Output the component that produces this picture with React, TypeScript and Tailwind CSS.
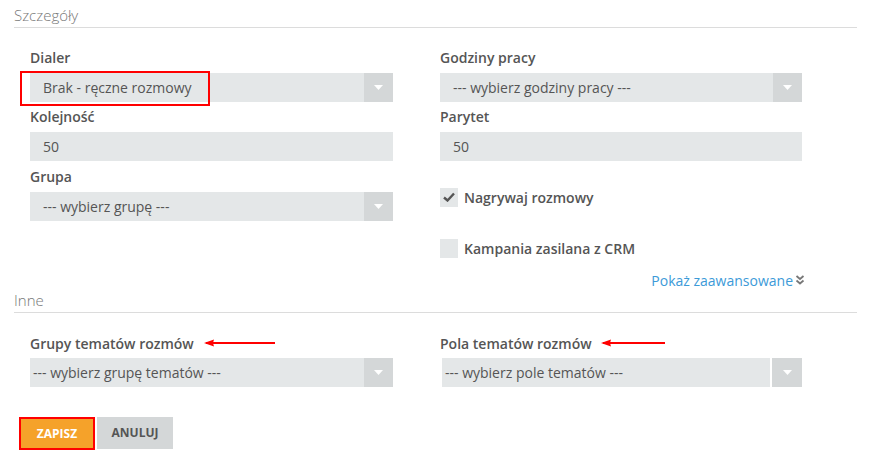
import React from 'react';

const font = { fontFamily: '"Open Sans", "Liberation Sans", sans-serif' };

function Caret() {
  return (
    <svg width="9" height="5" viewBox="0 0 9 5">
      <path d="M0 0 L9 0 L4.5 5 Z" fill="#fff" />
    </svg>
  );
}

function RedArrow({ width }: { width: number }) {
  return (
    <svg width={width} height="8" viewBox={`0 0 ${width} 8`} className="shrink-0">
      <path d={`M2 4 L${width} 4`} stroke="#ff0000" strokeWidth="2" />
      <path d="M0 4 L10 0.5 L9 4 L10 7.5 Z" fill="#ff0000" />
    </svg>
  );
}

function Label({ children }: { children: React.ReactNode }) {
  return (
    <div className="h-[20px] mb-[5px] text-[14px] leading-[20px] font-semibold text-[#555]">
      {children}
    </div>
  );
}

function Select({ value, pad = 'pl-[13px]' }: { value: string; pad?: string }) {
  return (
    <div className="flex h-[29px] bg-[#e4e7e8]">
      <div className={`flex-1 flex items-center text-[14px] text-[#555] ${pad}`}>{value}</div>
      <div className="w-[29px] flex items-center justify-center bg-[#d4d7d8]">
        <Caret />
      </div>
    </div>
  );
}

function Input({ value }: { value: string }) {
  return (
    <div className="h-[29px] bg-[#e4e7e8] flex items-center pl-[13px] text-[14px] text-[#555]">
      {value}
    </div>
  );
}

function Checkbox({ checked, label }: { checked?: boolean; label: string }) {
  return (
    <div className="flex items-center h-[20px]">
      <div className="w-[18px] h-[19px] bg-[#e4e7e8] flex items-center justify-center">
        {checked && (
          <svg width="12" height="10" viewBox="0 0 12 10">
            <path d="M1 5.5 L4.5 8.5 L11 1.5" stroke="#555" strokeWidth="2.4" fill="none" />
          </svg>
        )}
      </div>
      <span className="ml-[6px] text-[14px] font-semibold text-[#555]">{label}</span>
    </div>
  );
}

function SectionTitle({ children }: { children: React.ReactNode }) {
  return (
    <div className="border-b border-[#dcdcdc] h-[28px] pt-[5px] text-[15px] leading-[20px] font-light text-[#777]">
      {children}
    </div>
  );
}

export default function App() {
  return (
    <div className="w-[870px] h-[460px] bg-white pl-[14px] pr-[13px]" style={font}>
      <SectionTitle>Szczegóły</SectionTitle>

      <div className="grid grid-cols-[363px_362px] gap-x-[47px] pl-[16px] pt-[20px]">
        {/* left column */}
        <div>
          <Label>Dialer</Label>
          <div className="relative">
            <Select value="Brak - ręczne rozmowy" />
            <div className="absolute left-[-10px] top-[-2px] w-[190px] h-[35px] border-2 border-[#ff0000]" />
          </div>
          <div className="mt-[5px]">
            <Label>Kolejność</Label>
            <Input value="50" />
          </div>
          <div className="mt-[6px]">
            <Label>Grupa</Label>
            <Select value="--- wybierz grupę ---" />
          </div>
        </div>

        {/* right column */}
        <div>
          <Label>Godziny pracy</Label>
          <Select value="--- wybierz godziny pracy ---" />
          <div className="mt-[5px]">
            <Label>Parytet</Label>
            <Input value="50" />
          </div>
          <div className="mt-[26px]">
            <Checkbox checked label="Nagrywaj rozmowy" />
          </div>
          <div className="mt-[31px]">
            <Checkbox label="Kampania zasilana z CRM" />
          </div>
          <div className="mt-[12px] h-[20px] flex justify-end items-center text-[14px] text-[#3c9ad8] -mr-[3px]">
            Pokaż zaawansowane
            <svg width="10" height="10" viewBox="0 0 10 10" className="ml-[2px]">
              <path d="M1.5 1 L5 4 L8.5 1 M1.5 5.5 L5 8.5 L8.5 5.5" stroke="#777" strokeWidth="1.8" fill="none" />
            </svg>
          </div>
        </div>
      </div>

      <div className="-mt-[5px]">
        <SectionTitle>Inne</SectionTitle>
      </div>

      <div className="grid grid-cols-[363px_362px] gap-x-[47px] pl-[16px] pt-[20px]">
        <div>
          <div className="flex items-center h-[20px] mb-[5px]">
            <span className="text-[14px] font-semibold text-[#555]">Grupy tematów rozmów</span>
            <span className="ml-[10px]">
              <RedArrow width={71} />
            </span>
          </div>
          <Select value="--- wybierz grupę tematów ---" pad="pl-[3px]" />
        </div>
        <div>
          <div className="flex items-center h-[20px] mb-[5px]">
            <span className="text-[14px] font-semibold text-[#555]">Pola tematów rozmów</span>
            <span className="ml-[9px]">
              <RedArrow width={64} />
            </span>
          </div>
          <div className="flex h-[29px]">
            <div className="ml-[2px] w-[328px] bg-[#e4e7e8] flex items-center pl-[3px] text-[14px] text-[#555]">
              --- wybierz pole tematów ---
            </div>
            <div className="ml-[2px] w-[30px] bg-[#d4d7d8] flex items-center justify-center">
              <Caret />
            </div>
          </div>
        </div>
      </div>

      <div className="flex items-start mt-[30px] pl-[5px]">
        <button className="w-[76px] h-[33px] bg-[#f5a22a] border-2 border-[#ff0000] text-white text-[12px] font-bold">
          ZAPISZ
        </button>
        <button className="ml-[2px] w-[76px] h-[32px] bg-[#d4d7d8] text-[#555] text-[12px] font-bold">
          ANULUJ
        </button>
      </div>
    </div>
  );
}
